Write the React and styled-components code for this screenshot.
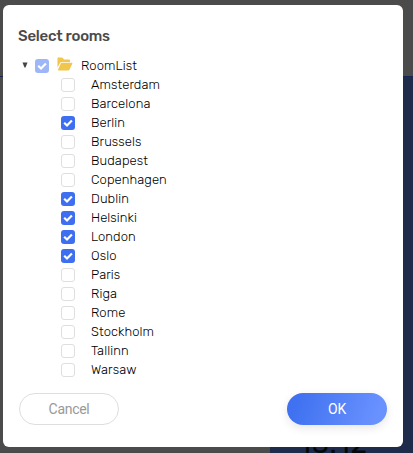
import React, { useState } from 'react'
import styled, { createGlobalStyle } from 'styled-components'

const GlobalStyle = createGlobalStyle`
    * {
        box-sizing: border-box;
    }
    body {
        margin: 0;
        overflow: hidden;
        font-family: Rubik, Roboto, sans-serif;
    }
`

const Page = styled.div`
    display: flex;
    flex-direction: column;
    height: 100vh;
    background: #4b4b4b;
`
const PageHeader = styled.div`
    height: 77px;
    border-bottom: 1px solid #18274f;
`
const PageBody = styled.div`
    flex: 1;
    display: flex;
    justify-content: flex-end;
    min-height: 0;
`
const ClockPanel = styled.div`
    display: flex;
    align-items: flex-end;
    width: 143px;
    padding-left: 29px;
    background: #1f2b4b;
`
const Clock = styled.div`
    font-size: 28px;
    line-height: 20px;
    height: 19px;
    letter-spacing: 0.9px;
    font-weight: 400;
    color: #050709;
`

const Overlay = styled.div`
    position: absolute;
    top: 0;
    left: 0;
    padding: 5px 0 0 3px;
`
const Dialog = styled.div`
    display: flex;
    flex-direction: column;
    width: 400px;
    height: 442px;
    padding: 21px 16px 22px;
    border-radius: 6px;
    background: #fff;
`
const Title = styled.h2`
    margin: 0 0 10px -1px;
    font-size: 15px;
    line-height: 20px;
    font-weight: 500;
    letter-spacing: -0.25px;
    color: #4a4a4a;
`
const Tree = styled.div`
    flex: 1;
`
const Row = styled.label`
    display: flex;
    align-items: center;
    height: 19px;
    padding-left: ${(props) => (props.$child ? '42px' : '3px')};
    font-size: 13px;
    font-weight: 300;
    color: #000;
`
const Arrow = styled.svg`
    width: 6px;
    height: 6px;
    margin: -2px 7px 0 0;
`
const Folder = styled.svg`
    width: 16px;
    height: 14px;
    margin: -3px 8px 0 8px;
`
const Box = styled.span`
    display: flex;
    flex: none;
    width: 14px;
    height: 14px;
    border: ${(props) => (props.$on ? 'none' : '1px solid #dfdfdf')};
    border-radius: 3px;
    background: ${(props) => (props.$on ? '#3d6ff0' : '#fff')};
    opacity: ${(props) => (props.$partial ? 0.5 : 1)};
`
const HiddenInput = styled.input`
    display: none;
`
const Name = styled.span`
    margin-left: ${(props) => (props.$child ? '16px' : '0')};
    letter-spacing: 0.08px;
`
const Buttons = styled.div`
    display: flex;
    justify-content: space-between;
`
const Button = styled.button`
    width: 100px;
    height: 32px;
    padding: 0;
    border: ${(props) => (props.$primary ? 'none' : '1px solid #dedede')};
    border-radius: 16px;
    font-family: Roboto, sans-serif;
    font-size: 14px;
    letter-spacing: -0.3px;
    color: ${(props) => (props.$primary ? '#fff' : '#999')};
    background: ${(props) => (props.$primary ? 'linear-gradient(108deg, #3f71f0 10%, #6a92ff 90%)' : '#fff')};
    box-shadow: ${(props) => (props.$primary ? '0 3px 10px rgba(0, 0, 0, 0.1)' : 'none')};
`

const rooms = [
    'Amsterdam', 'Barcelona', 'Berlin', 'Brussels', 'Budapest', 'Copenhagen', 'Dublin', 'Helsinki',
    'London', 'Oslo', 'Paris', 'Riga', 'Rome', 'Stockholm', 'Tallinn', 'Warsaw'
]

const Checkbox = ({ checked, partial, onChange }) => (
    <>
        <HiddenInput type="checkbox" checked={checked} onChange={onChange} />
        <Box $on={checked} $partial={partial}>
            {checked ? (
                <svg width="14" height="14" viewBox="0 0 14 14">
                    <path d="M3.2 6.8 L6 9.5 L10.9 4.4" fill="none" stroke="#fff" strokeWidth="2.2" />
                </svg>
            ) : null}
        </Box>
    </>
)

const App = () => {
    const [selected, setSelected] = useState(['Berlin', 'Dublin', 'Helsinki', 'London', 'Oslo'])

    const toggleRoom = (room) => {
        setSelected(selected.includes(room) ? selected.filter((r) => r !== room) : [...selected, room])
    }
    const toggleAll = () => {
        setSelected(selected.length ? [] : rooms)
    }

    return (
        <Page>
            <GlobalStyle />
            <PageHeader />
            <PageBody>
                <ClockPanel>
                    <Clock>13:12</Clock>
                </ClockPanel>
            </PageBody>
            <Overlay>
                <Dialog>
                    <Title>Select rooms</Title>
                    <Tree>
                        <Row>
                            <Arrow viewBox="0 0 6 6">
                                <path d="M0.5 0.5 H5.5 L3.5 5.5 H2.5 Z" fill="#444" />
                            </Arrow>
                            <Checkbox
                                checked={selected.length > 0}
                                partial={selected.length < rooms.length}
                                onChange={toggleAll}
                            />
                            <Folder viewBox="0 0 16 14">
                                <path d="M1 0.5 H5.2 L7 2.5 H12 Q13 2.5 13 3.5 V5 H4.5 Q3.5 5 3 6 L0.5 10.5 V1 Q0.5 0.5 1 0.5 Z" fill="#f0c64c" />
                                <path d="M4.7 5.7 H14.8 Q15.8 5.7 15.4 6.6 L12.6 12.6 Q12.2 13.4 11.3 13.4 H1.5 Q0.7 13.4 1.1 12.6 L3.8 6.4 Q4.1 5.7 4.7 5.7 Z" fill="#f0c64c" />
                            </Folder>
                            <Name>RoomList</Name>
                        </Row>
                        {rooms.map((room) => (
                            <Row key={room} $child>
                                <Checkbox checked={selected.includes(room)} onChange={() => toggleRoom(room)} />
                                <Name $child>{room}</Name>
                            </Row>
                        ))}
                    </Tree>
                    <Buttons>
                        <Button>Cancel</Button>
                        <Button $primary>OK</Button>
                    </Buttons>
                </Dialog>
            </Overlay>
        </Page>
    )
}

export default App
